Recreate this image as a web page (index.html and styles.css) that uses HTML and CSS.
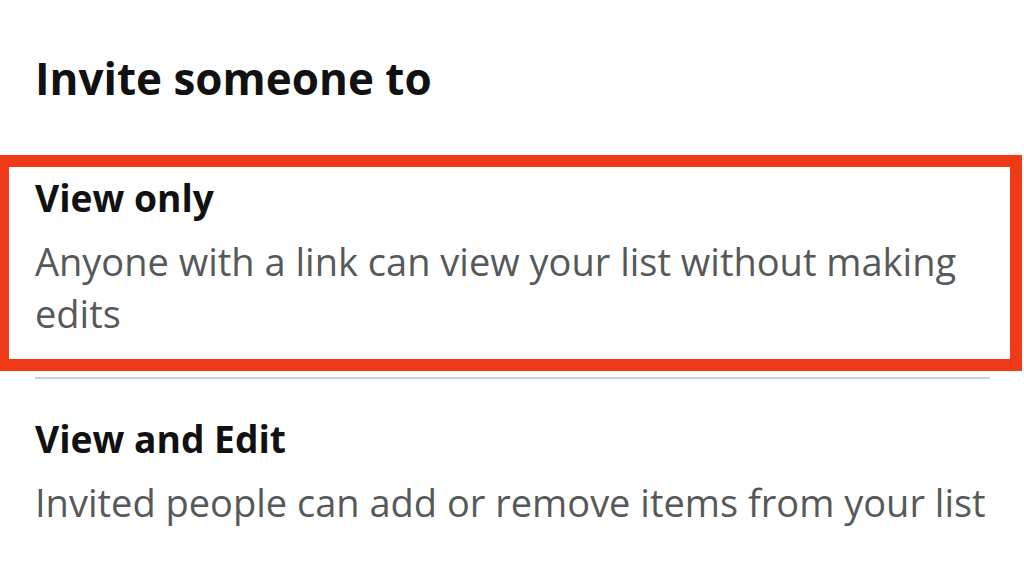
FILE: index.html
```html
<!DOCTYPE html>
<html lang="en">
<head>
<meta charset="utf-8">
<title>Invite someone to</title>
<link rel="stylesheet" href="styles.css">
</head>
<body>
<main class="sheet">
  <h1 class="title">Invite someone to</h1>
  <ul class="options">
    <li class="option option--highlighted">
      <h2 class="option-name">View only</h2>
      <p class="option-desc">Anyone with a link can view your list without making edits</p>
    </li>
    <li class="divider" aria-hidden="true"></li>
    <li class="option">
      <h2 class="option-name">View and Edit</h2>
      <p class="option-desc">Invited people can add or remove items from your list</p>
    </li>
  </ul>
</main>
</body>
</html>
```

FILE: styles.css
```css
html, body {
  margin: 0;
  padding: 0;
  background: #ffffff;
}

body {
  width: 1024px;
  height: 587px;
  overflow: hidden;
  font-family: "Open Sans", "Noto Sans", "Liberation Sans", sans-serif;
}

.sheet {
  padding: 48px 34px 0 35px;
}

.title {
  margin: 0;
  font-size: 44px;
  line-height: 60px;
  font-weight: 700;
  color: #111111;
}

.options {
  list-style: none;
  margin: 47px 0 0 0;
  padding: 0;
}

.option-name {
  margin: 0;
  font-size: 37.2px;
  line-height: 52px;
  font-weight: 700;
  color: #111111;
}

.option-desc {
  margin: 11px 0 0 0;
  font-size: 38px;
  line-height: 52px;
  font-weight: 400;
  color: #565959;
}

.option--highlighted {
  margin: 0 -32px 0 -35px;
  border-style: solid;
  border-color: #f03a17;
  border-width: 12px 12px 12px 9px;
  padding: 4.6px 12px 20px 26px;
}

.divider {
  height: 2px;
  margin-top: 6px;
  background: #cfd1d1;
}

.option:not(.option--highlighted) {
  padding-top: 34.3px;
}
```
